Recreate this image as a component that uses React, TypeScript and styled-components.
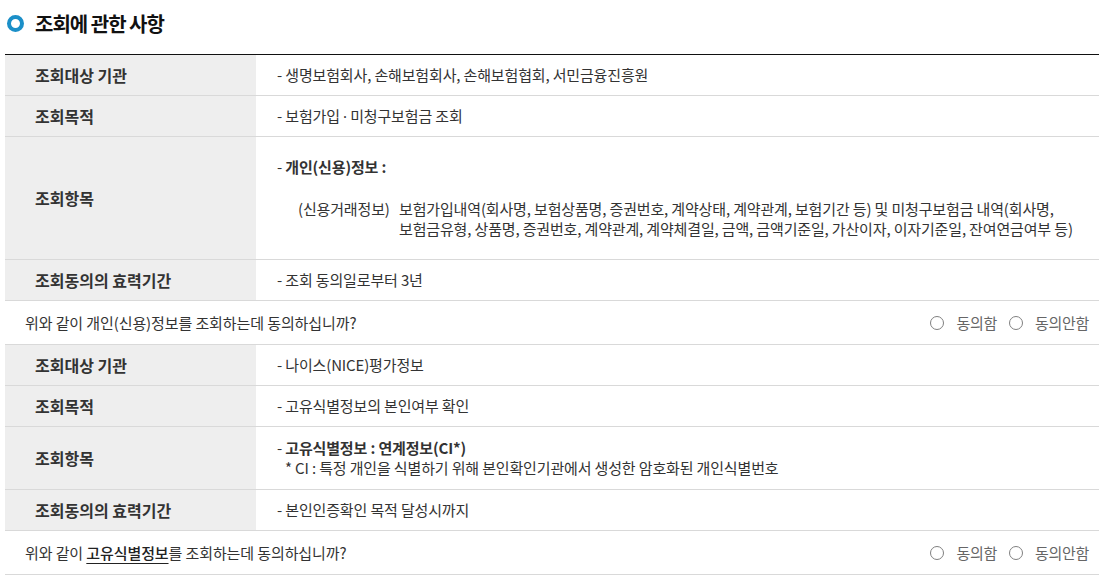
import React from "react";
import styled, { createGlobalStyle } from "styled-components";

const GlobalStyle = createGlobalStyle`
  html, body { margin: 0; padding: 0; background: #fff; }
  body {
    font-family: "Noto Sans CJK KR", "Noto Sans", sans-serif;
    color: #333;
    -webkit-font-smoothing: antialiased;
  }
`;

const Page = styled.div`
  width: 1108px;
  padding: 0 9px 0 5px;
  box-sizing: border-box;
`;

const Header = styled.h2`
  display: flex;
  align-items: center;
  gap: 11px;
  height: 46px;
  margin: 0 0 8px 2px;
  font-size: 20px;
  font-weight: 700;
  letter-spacing: -1px;
  color: #111;
`;

const Bullet = styled.span`
  width: 9px;
  height: 9px;
  border: 4.5px solid #1b8fc8;
  border-radius: 50%;
  background: #fff;
  flex: none;
`;

const Table = styled.div`
  border-top: 1px solid #111;
`;

const Row = styled.div`
  display: grid;
  grid-template-columns: 251px 1fr;
  border-bottom: 1px solid #d9d9d9;
`;

const Label = styled.div`
  display: flex;
  align-items: center;
  background: #eeeeee;
  padding: 0 0 0 30px;
  font-size: 16px;
  font-weight: 700;
  letter-spacing: 0;
  color: #333;
`;

const Cell = styled.div<{ $pad?: string }>`
  padding: ${(p) => p.$pad ?? "10px 21px"};
  font-size: 15px;
  line-height: 20px;
  letter-spacing: -0.15px;
  color: #333;
`;

const Strong = styled.span`
  font-weight: 700;
`;

const Dot = styled.span`
  font-family: "Noto Sans", sans-serif;
`;

const Detail = styled.div`
  display: grid;
  grid-template-columns: 101px 1fr;
  margin: 22px 0 0 21px;
`;

const Note = styled.div`
  padding-left: 8px;
`;

const Question = styled.div`
  display: flex;
  align-items: center;
  justify-content: space-between;
  height: 43px;
  padding: 0 10px 0 20px;
  border-bottom: 1px solid #d9d9d9;
  font-size: 15px;
  letter-spacing: -0.1px;
  color: #333;
`;

const Emph = styled.span`
  font-weight: 500;
  color: #222;
  text-decoration: underline;
  text-underline-offset: 4px;
  text-decoration-thickness: 1px;
`;

const Radios = styled.div`
  display: flex;
  align-items: center;
  gap: 12px;
`;

const RadioLabel = styled.label`
  display: flex;
  align-items: center;
  gap: 12px;
  color: #666;
  font-size: 15px;
  letter-spacing: -0.3px;
  cursor: pointer;
`;

const Circle = styled.span`
  width: 12px;
  height: 12px;
  border: 1px solid #808080;
  border-radius: 50%;
  background: #fff;
  flex: none;
`;

const Consent = () => (
  <Radios>
    <RadioLabel>
      <Circle />
      동의함
    </RadioLabel>
    <RadioLabel>
      <Circle />
      동의안함
    </RadioLabel>
  </Radios>
);

export default function App() {
  return (
    <Page>
      <GlobalStyle />
      <Header>
        <Bullet />
        조회에 관한 사항
      </Header>
      <Table>
        <Row>
          <Label>조회대상 기관</Label>
          <Cell>- 생명보험회사, 손해보험회사, 손해보험협회, 서민금융진흥원</Cell>
        </Row>
        <Row>
          <Label>조회목적</Label>
          <Cell>
            - 보험가입 <Dot>·</Dot> 미청구보험금 조회
          </Cell>
        </Row>
        <Row>
          <Label>조회항목</Label>
          <Cell $pad="20px 21px">
            <div>
              - <Strong>개인(신용)정보 :</Strong>
            </div>
            <Detail>
              <div>(신용거래정보)</div>
              <div>
                보험가입내역(회사명, 보험상품명, 증권번호, 계약상태, 계약관계, 보험기간 등) 및 미청구보험금 내역(회사명,
                <br />
                보험금유형, 상품명, 증권번호, 계약관계, 계약체결일, 금액, 금액기준일, 가산이자, 이자기준일, 잔여연금여부 등)
              </div>
            </Detail>
          </Cell>
        </Row>
        <Row>
          <Label>조회동의의 효력기간</Label>
          <Cell>- 조회 동의일로부터 3년</Cell>
        </Row>
        <Question>
          <span>위와 같이 개인(신용)정보를 조회하는데 동의하십니까?</span>
          <Consent />
        </Question>
        <Row>
          <Label>조회대상 기관</Label>
          <Cell>- 나이스(NICE)평가정보</Cell>
        </Row>
        <Row>
          <Label>조회목적</Label>
          <Cell>- 고유식별정보의 본인여부 확인</Cell>
        </Row>
        <Row>
          <Label>조회항목</Label>
          <Cell $pad="11px 21px">
            <div>
              - <Strong>고유식별정보 : 연계정보(CI*)</Strong>
            </div>
            <Note>* CI : 특정 개인을 식별하기 위해 본인확인기관에서 생성한 암호화된 개인식별번호</Note>
          </Cell>
        </Row>
        <Row>
          <Label>조회동의의 효력기간</Label>
          <Cell>- 본인인증확인 목적 달성시까지</Cell>
        </Row>
        <Question>
          <span>
            위와 같이 <Emph>고유식별정보</Emph>를 조회하는데 동의하십니까?
          </span>
          <Consent />
        </Question>
      </Table>
    </Page>
  );
}
